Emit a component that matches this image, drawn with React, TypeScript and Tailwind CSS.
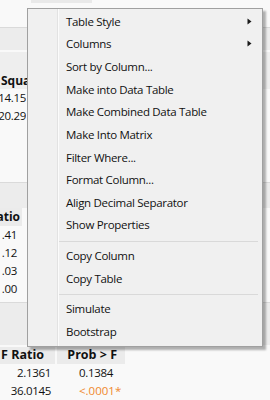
import { Fragment } from "react"

type Entry = { label: string; sub?: boolean } | "sep"

const entries: Entry[] = [
  { label: "Table Style", sub: true },
  { label: "Columns", sub: true },
  { label: "Sort by Column..." },
  { label: "Make into Data Table" },
  { label: "Make Combined Data Table" },
  { label: "Make Into Matrix" },
  { label: "Filter Where..." },
  { label: "Format Column..." },
  { label: "Align Decimal Separator" },
  { label: "Show Properties" },
  "sep",
  { label: "Copy Column" },
  { label: "Copy Table" },
  "sep",
  { label: "Simulate" },
  { label: "Bootstrap" },
]

function Arrow() {
  return (
    <svg width="5" height="7" viewBox="0 0 5 7" className="block">
      <path d="M0.5 0.5 L4.5 3.5 L0.5 6.5 Z" fill="#1a1a1a" />
    </svg>
  )
}

function ContextMenu() {
  return (
    <div className="absolute left-[27px] top-[8px] w-[236px] h-[339px] bg-[#f0f0f0] border border-[#a0a0a0] shadow-[3px_3px_2px_rgba(0,0,0,0.3)]">
      {/* icon gutter line */}
      <div className="absolute left-[29px] top-0 bottom-0 w-px bg-[#e2e2e2]" />
      <div className="absolute left-[30px] top-0 bottom-0 w-px bg-[#fbfbfb]" />
      <div className="pt-px">
        {entries.map((e, i) =>
          e === "sep" ? (
            <div key={i} className="h-[8px] pt-[4px] pl-[31px] pr-[4px]">
              <div className="h-px bg-[#d9d9d9]" />
            </div>
          ) : (
            <div key={i} className="h-[22.67px] flex items-center pl-[38px] pr-[10px] text-[#111]">
              <span className="flex-1 leading-none">{e.label}</span>
              {e.sub && <Arrow />}
            </div>
          )
        )}
      </div>
    </div>
  )
}

export default function App() {
  return (
    <div
      className="relative w-[270px] h-[400px] overflow-hidden bg-[#f9f9f9] text-[11.5px] tracking-[-0.3px] text-[#111]"
      style={{ fontFamily: '"Segoe UI", "Open Sans", Arial, sans-serif' }}
    >
      {/* background report */}
      <div className="h-[3px]">
        <div className="ml-[31px] w-[61px] h-full bg-[#e9e9e9]" />
      </div>
      <div className="h-[24px]" />
      <div className="h-[23px] bg-[#ececec] border-t border-[#dadada]" />
      <div className="h-[2px]" />
      <div className="h-[37px] bg-[#eeeeee] flex flex-col justify-end pb-[2px] font-bold leading-none text-[12px] tracking-normal">
        <span className="pl-[1px]">Squares</span>
      </div>
      {["114.15", "120.29"].map((v) => (
        <div key={v} className="h-[18px] flex items-center justify-end w-[26px] overflow-hidden">
          <span className="whitespace-nowrap">{v}</span>
        </div>
      ))}
      <div className="h-[57px]" />
      <div className="h-[26px] bg-[#ececec] border-t border-[#dadada]" />
      <div className="h-[18px] flex">
        <div className="w-[22px] bg-[#ebebeb] flex items-center justify-end font-bold text-[12px] tracking-normal whitespace-nowrap overflow-hidden">
          <span className="pr-[2px]">F Ratio</span>
        </div>
      </div>
      {[".41", ".12", ".03", ".00"].map((v, i) => (
        <div key={i} className="h-[18px] w-[17px] flex items-center justify-end">
          {v}
        </div>
      ))}
      <div className="h-[4px]" />
      <div className="h-[43px] bg-[#ececec] border-t border-[#dadada]" />
      <div className="h-[2px]" />
      <div className="h-[17px] flex gap-[2px] font-bold leading-none text-[12.5px] tracking-normal">
        <div className="w-[55px] bg-[#ebebeb] flex items-center justify-end pr-[11px]">F Ratio</div>
        <div className="w-[68px] bg-[#ebebeb] flex items-center justify-end pr-[8px]">Prob &gt; F</div>
      </div>
      {[
        ["2.1361", "0.1384", false],
        ["36.0145", "<.0001*", true],
      ].map(([a, b, sig], i) => (
        <Fragment key={i}>
          <div className="h-[18px] flex items-center">
            <div className="w-[51px] text-right">{a}</div>
            <div className="w-[28px]" />
            <div className={sig ? "text-[#f0882e] tracking-normal" : ""}>{b}</div>
          </div>
        </Fragment>
      ))}

      <ContextMenu />
    </div>
  )
}
